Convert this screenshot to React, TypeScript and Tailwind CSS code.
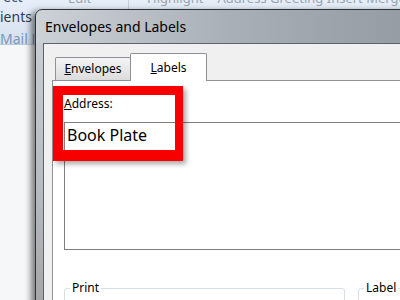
function Ribbon() {
  return (
    <div className="h-[45px] bg-gradient-to-b from-[#e6eef8] to-[#d5e1ef] border-b border-[#b9c9dd] flex text-[14px] leading-[20px] whitespace-nowrap overflow-hidden">
      <div className="w-[34px] shrink-0 flex flex-col -mt-[13px] overflow-hidden">
        <div className="pl-[3px] text-[#3c4f66]">ect</div>
        <div className="text-[#2e3e52]">ients <span className="text-[9px]">▼</span></div>
        <div className="text-[#7b97b8]">Mail Merge</div>
      </div>
      <div className="flex items-start -mt-[12px] text-[13px] text-[#9aa3ad]">
        <div className="ml-[34px] w-[60px]">Edit</div>
        <div className="w-px h-[20px] bg-[#c2cfdf] mt-[10px]" />
        <div className="ml-[18px]">Highlight</div>
        <div className="ml-[14px]">Address Greeting Insert Merge</div>
      </div>
    </div>
  )
}

function Dialog() {
  return (
    <div className="absolute left-[35px] top-[9px] w-[380px] h-[300px] rounded-t-[7px] border border-[#2e3338] bg-gradient-to-r from-[#cdd2d7] via-[#a9b0b7] to-[#939ba3] shadow-[-4px_2px_6px_rgba(0,0,0,0.5)] flex flex-col">
      <div className="h-[33px] shrink-0 flex items-center pl-[9px] text-[14px] text-black">
        Envelopes and Labels
      </div>
      <div className="flex-1 flex">
        <div className="w-[7px] shrink-0 bg-gradient-to-b from-[#c9cdd1] via-[#b8bcc0] to-[#a3a3a3]" />
        <div className="flex-1 flex flex-col border-l border-t border-[#5c636b] bg-[#f0f0f0] pl-[8px] pt-[9px]">
          <div className="flex items-end h-[27px] pl-[3px] text-[12px] text-black">
            <div className="w-[76px] h-[23px] flex items-center justify-center border border-b-0 border-[#8e9196] rounded-t-[2px] bg-gradient-to-b from-[#f4f4f4] to-[#dcdcdc]">
              <span><span className="underline">E</span>nvelopes</span>
            </div>
            <div className="w-[77px] h-[28px] -ml-px -mb-px flex items-center justify-center border border-b-0 border-[#8e9196] rounded-t-[2px] bg-white relative z-10">
              <span><span className="underline">L</span>abels</span>
            </div>
          </div>
          <Panel />
        </div>
      </div>
    </div>
  )
}

function Panel() {
  return (
    <div className="flex-1 relative border-l border-t border-[#8e9196] bg-white pl-[11px] pt-[15px]">
      <div className="text-[12px] leading-[16px] text-black">
        <span className="underline">A</span>ddress:
      </div>
      <div className="mt-[10px] h-[128px] border border-r-0 border-[#7f7f7f] pl-[2px] pt-[2px] text-[16px] leading-[20px] text-black">
        Book Plate
      </div>
      <div className="mt-[30px] flex gap-[13px] text-[12px] text-black">
        <fieldset className="w-[281px] h-[40px] shrink-0 border border-[#d5dfe5] rounded-[3px] pl-[5px]">
          <legend className="px-[2px] leading-[16px]">Print</legend>
        </fieldset>
        <fieldset className="w-[80px] h-[40px] shrink-0 border border-[#d5dfe5] rounded-[3px] pl-[5px]">
          <legend className="px-[2px] leading-[16px]">Label</legend>
        </fieldset>
      </div>
      <div className="absolute left-0 top-[5px] w-[130px] h-[75px] border-l-[10px] border-t-[9px] border-r-[8px] border-b-[11px] border-[#f60000] shadow-[3px_3px_5px_rgba(0,0,0,0.35)]" />
    </div>
  )
}

export default function App() {
  return (
    <div className="relative w-[400px] h-[300px] overflow-hidden bg-[#f6f7f8] font-['Noto_Sans',sans-serif]">
      <Ribbon />
      <Dialog />
    </div>
  )
}
